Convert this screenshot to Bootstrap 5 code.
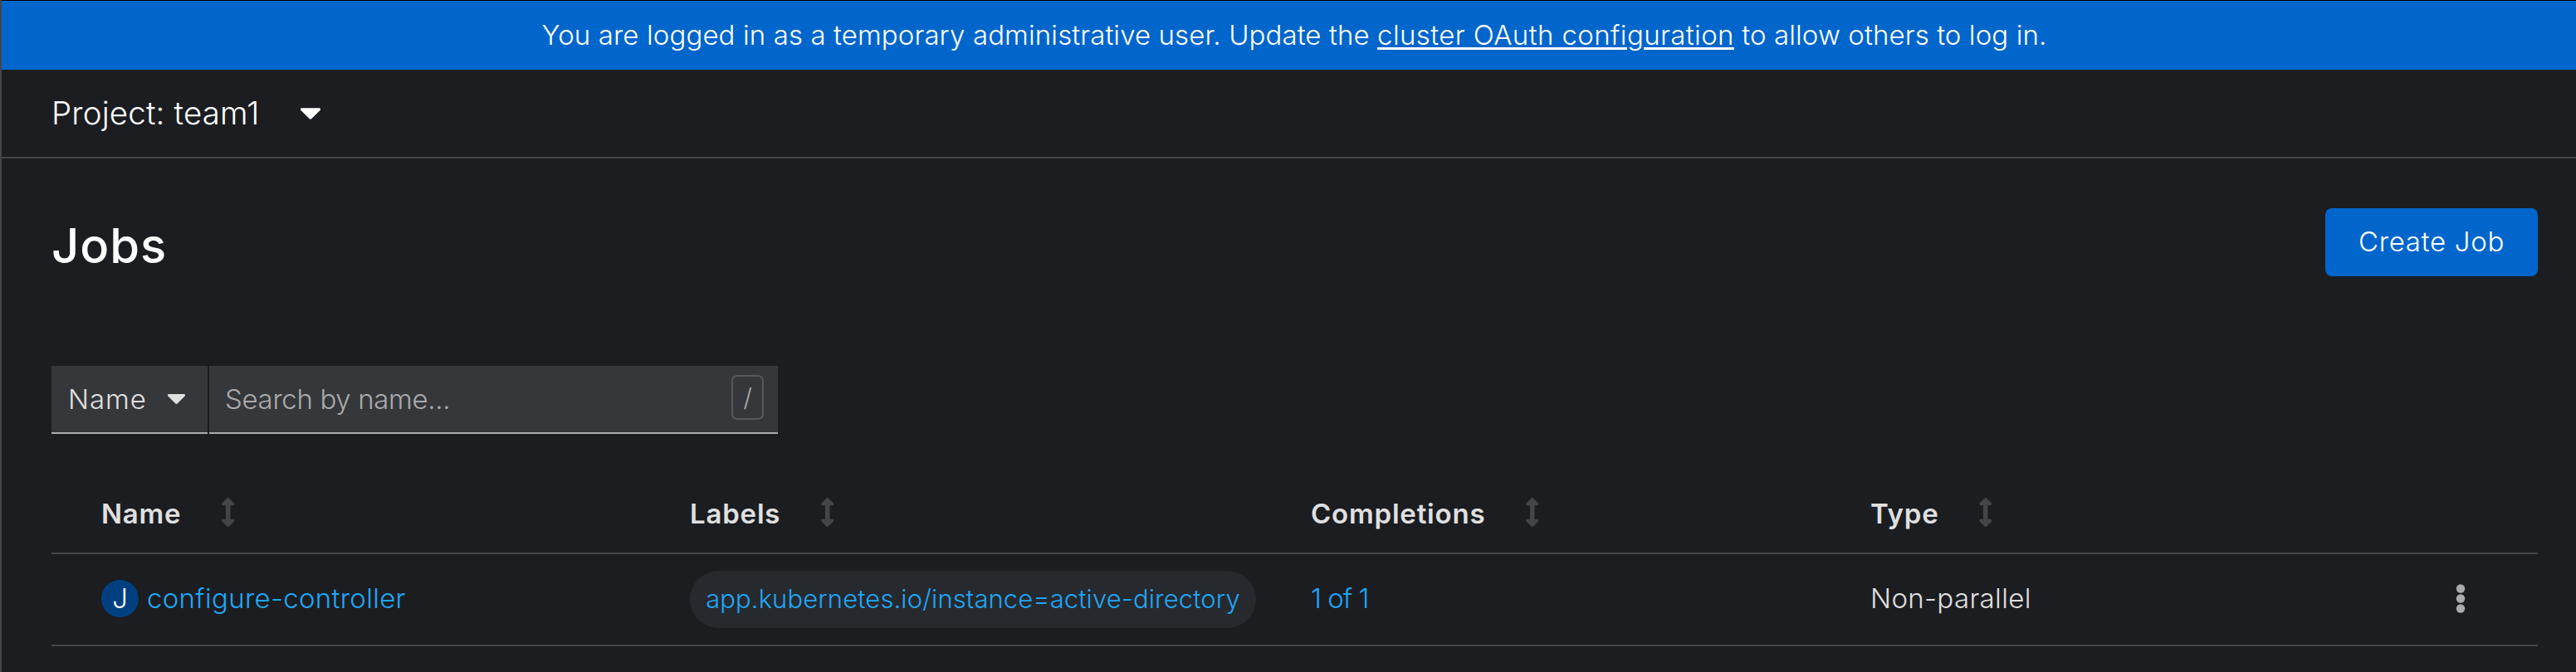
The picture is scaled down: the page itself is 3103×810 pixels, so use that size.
<!DOCTYPE html>
<html lang="en" data-bs-theme="dark">
<head>
<meta charset="utf-8">
<title>Jobs</title>
<link href="https://cdn.jsdelivr.net/npm/bootstrap@5.3.0/dist/css/bootstrap.min.css" rel="stylesheet">
<style>
body{background:#1b1d21;color:#e0e0e0;font-family:Inter,sans-serif;font-size:33px;font-weight:300;line-height:1.4;height:810px;overflow:hidden}
a{color:#1fa7f8;text-decoration:none}
.console{height:810px;border-left:2px solid #444548}
.notice{height:84px;padding-left:13px;background:#06c;border-top:1px solid #000;color:#fff;letter-spacing:.1px}
.notice a{color:#fff;text-decoration:underline;text-decoration-thickness:3px;text-underline-offset:3px;letter-spacing:.4px}
.project-bar{height:107px;border-bottom:2px solid #444548;padding-left:60px;color:#fff;font-size:38.5px;letter-spacing:.15px}
.project-bar svg{width:24px;height:14px;margin-left:49px}
.content{padding:60px 46px 0 60px}
.page-title{font-size:58px;font-weight:500;line-height:82px;margin:4px 0 0;color:#fff;letter-spacing:.9px}
.btn-create{width:256px;height:82px;background:#06c;border:0;border-radius:8px;color:#fff;font-size:33px;font-weight:300;letter-spacing:.7px;padding:0}
.filters{height:82px;margin-top:104px;gap:2px}
.filter-kind{width:188px;background:#36373a;border:0;border-bottom:2px solid #aaabac;color:#e0e0e0;padding:0 27px 0 20px;letter-spacing:.9px;font-weight:300}
.filter-kind svg{width:21px;height:12px}
.filter-search{width:685px;background:#36373a;border-bottom:2px solid #aaabac;padding:0 17px 0 19px;color:#aaabac;letter-spacing:-.35px}
.key-hint{width:39px;height:54px;border:2px solid #57585a;border-radius:7px;font-size:30px;margin-bottom:5px}
.jobs{margin:49px 0 0;table-layout:fixed;width:2995px;border-collapse:separate;border-spacing:0;--bs-table-bg:transparent;color:#e0e0e0}
.jobs th,.jobs td{padding:0;border-bottom:2px solid #444548;color:#e0e0e0;white-space:nowrap;vertical-align:middle}
.jobs th{height:96px;font-weight:600;letter-spacing:.8px}
.jobs td{height:111px}
.jobs tr>:first-child{padding-left:60px}
.jobs th svg{width:17.5px;height:35px;fill:#444548;margin:0 0 3px 48px}
.kind{width:45px;height:45px;border-radius:50%;background:#004080;color:#fff;font-size:33px;margin-right:10px;line-height:1}
.tag{height:69px;border-radius:35px;width:682px;background:#26292d;font-size:31px;letter-spacing:.1px;padding-bottom:1px}
.lift{position:relative;top:-1px}
</style>
</head>
<body>
<div class="console">
  <div class="notice d-flex align-items-center justify-content-center">
    <span>You are logged in as a temporary administrative user. Update the <a href="#">cluster OAuth configuration</a> to allow others to log in.</span>
  </div>
  <div class="project-bar d-flex align-items-center">
    <span>Project: team1</span>
    <svg viewBox="12 192 296 169" fill="#fff"><path id="caret" d="M31.3 192h257.3c17.8 0 26.7 21.5 14.1 34.1L174.1 354.7c-7.8 7.8-20.5 7.8-28.3 0L17.2 226.1C4.6 213.5 13.5 192 31.3 192z"/></svg>
  </div>
  <main class="content">
    <div class="d-flex justify-content-between align-items-start">
      <h1 class="page-title">Jobs</h1>
      <button class="btn btn-create" type="button">Create Job</button>
    </div>
    <div class="filters d-flex">
      <button class="filter-kind d-flex align-items-center justify-content-between" type="button">Name
        <svg viewBox="12 192 296 169" fill="#e0e0e0"><use href="#caret"/></svg>
      </button>
      <div class="filter-search d-flex align-items-center justify-content-between">
        <span>Search by name...</span>
        <span class="key-hint d-flex align-items-center justify-content-center">/</span>
      </div>
    </div>
    <table class="table jobs">
      <colgroup><col width="769"><col width="748"><col width="674"><col width="670"><col></colgroup>
      <thead>
        <tr>
          <th><span class="d-flex align-items-center">Name<svg viewBox="0 0 256 512"><path id="sort" d="M214.059 377.941H168V134.059h46.059c21.382 0 32.09-25.851 16.971-40.971L144.971 7.029c-9.373-9.373-24.568-9.373-33.941 0L24.971 93.088c-15.119 15.119-4.411 40.971 16.971 40.971H88v243.883H41.941c-21.382 0-32.09 25.851-16.971 40.971l86.059 86.059c9.373 9.373 24.568 9.373 33.941 0l86.059-86.059c15.12-15.119 4.412-40.971-16.97-40.971z"/></svg></span></th>
          <th><span class="d-flex align-items-center">Labels<svg viewBox="0 0 256 512"><use href="#sort"/></svg></span></th>
          <th><span class="d-flex align-items-center">Completions<svg viewBox="0 0 256 512"><use href="#sort"/></svg></span></th>
          <th><span class="d-flex align-items-center">Type<svg viewBox="0 0 256 512"><use href="#sort"/></svg></span></th>
          <th></th>
        </tr>
      </thead>
      <tbody>
        <tr>
          <td><div class="d-flex align-items-center lift"><span class="kind d-flex align-items-center justify-content-center">J</span><a href="#" style="letter-spacing:.3px">configure-controller</a></div></td>
          <td><a href="#" class="tag d-flex align-items-center justify-content-center">app.kubernetes.io/instance=active-directory</a></td>
          <td><a href="#" class="lift" style="letter-spacing:-1px">1 of 1</a></td>
          <td><span class="lift" style="letter-spacing:.35px">Non-parallel</span></td>
          <td><svg class="d-block ms-auto lift" style="margin-right:87px" width="12" height="36" viewBox="0 0 12 36" fill="#aaabac"><circle cx="6" cy="5.5" r="5.2"/><circle cx="6" cy="17.5" r="5.2"/><circle cx="6" cy="29.5" r="5.2"/></svg></td>
        </tr>
      </tbody>
    </table>
  </main>
</div>
<script src="https://cdn.jsdelivr.net/npm/bootstrap@5.3.0/dist/js/bootstrap.bundle.min.js"></script>
</body>
</html>
